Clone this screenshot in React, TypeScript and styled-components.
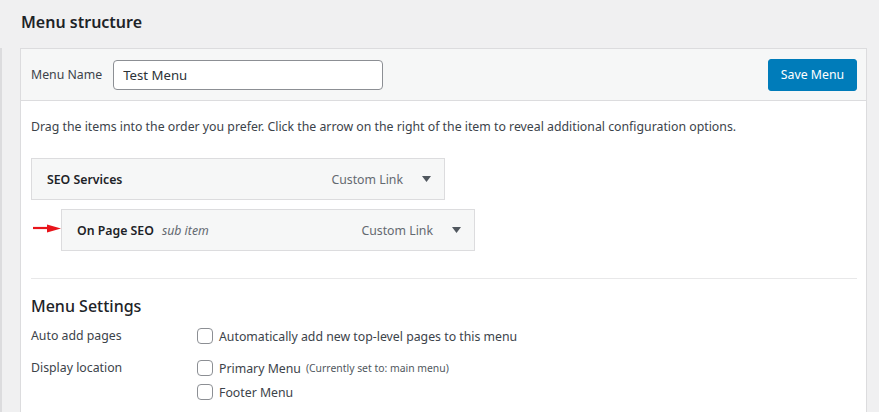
import React from 'react'
import styled, { createGlobalStyle } from 'styled-components'

const GlobalStyle = createGlobalStyle`
  html, body {
    margin: 0;
    padding: 0;
    background: #f0f0f1;
  }
  body {
    font-family: "Segoe UI", "Noto Sans", "Open Sans", sans-serif;
    font-size: 12.3px;
    color: #3c434a;
  }
`

type MenuItem = {
  title: string
  note?: string
  type: string
  depth: number
  marked?: boolean
}

const items: MenuItem[] = [
  { title: 'SEO Services', type: 'Custom Link', depth: 0 },
  { title: 'On Page SEO', note: 'sub item', type: 'Custom Link', depth: 1, marked: true },
]

function ToggleArrow() {
  return (
    <svg width="9" height="6" viewBox="0 0 9 6">
      <path d="M0 0 H9 L4.5 6 Z" fill="#50575e" />
    </svg>
  )
}

function RedArrow() {
  return (
    <svg width="28" height="9" viewBox="0 0 28 9">
      <path d="M0 3.6 H16 V4.4 H0 Z" fill="#e8141b" stroke="#e8141b" strokeWidth="1.4" />
      <path d="M14 0.5 L28 4.5 L14 8.5 Z" fill="#e8141b" />
    </svg>
  )
}

export default function App() {
  return (
    <>
      <GlobalStyle />
      <Page>
        <Title>Menu structure</Title>
        <Row>
          <SidebarEdge />
          <Panel>
            <PanelHeader>
              <NameLabel htmlFor="menu-name">Menu Name</NameLabel>
              <NameInput id="menu-name" type="text" defaultValue="Test Menu" />
              <SaveButton>Save Menu</SaveButton>
            </PanelHeader>
            <PanelBody>
              <Instructions>
                Drag the items into the order you prefer. Click the arrow on the right of the item to reveal
                additional configuration options.
              </Instructions>
              <ItemList>
                {items.map((item) => (
                  <ItemBar key={item.title} depth={item.depth}>
                    {item.marked && (
                      <Marker>
                        <RedArrow />
                      </Marker>
                    )}
                    <ItemTitle>
                      {item.title}
                      {item.note && <SubNote>{item.note}</SubNote>}
                    </ItemTitle>
                    <ItemControls>
                      <ItemType>{item.type}</ItemType>
                      <ToggleArrow />
                    </ItemControls>
                  </ItemBar>
                ))}
              </ItemList>
              <Settings>
                <SettingsTitle>Menu Settings</SettingsTitle>
                <SettingRow>
                  <SettingName>Auto add pages</SettingName>
                  <SettingInputs>
                    <CheckLine>
                      <Checkbox type="checkbox" />
                      Automatically add new top-level pages to this menu
                    </CheckLine>
                  </SettingInputs>
                </SettingRow>
                <SettingRow>
                  <SettingName>Display location</SettingName>
                  <SettingInputs>
                    <CheckLine>
                      <Checkbox type="checkbox" />
                      Primary Menu
                      <Hint>(Currently set to: main menu)</Hint>
                    </CheckLine>
                    <CheckLine>
                      <Checkbox type="checkbox" />
                      Footer Menu
                    </CheckLine>
                  </SettingInputs>
                </SettingRow>
              </Settings>
            </PanelBody>
          </Panel>
        </Row>
      </Page>
    </>
  )
}

const Page = styled.div`
  width: 879px;
  height: 412px;
  overflow: hidden;
`

const Title = styled.h2`
  margin: 0;
  padding: 11px 0 0 21px;
  height: 37px;
  font-size: 16px;
  line-height: 23px;
  font-weight: 600;
  color: #1d2327;
`

const Row = styled.div`
  display: flex;
  align-items: stretch;
  height: 364px;
`

const SidebarEdge = styled.div`
  width: 2px;
  background: #dcdcde;
  margin-right: 18px;
`

const Panel = styled.div`
  width: 845px;
  border: 1px solid #dcdcde;
  border-bottom: none;
  background: #fff;
`

const PanelHeader = styled.div`
  display: flex;
  align-items: center;
  height: 51px;
  padding: 0 9px 0 10px;
  background: #f6f7f7;
  border-bottom: 1px solid #dcdcde;
`

const NameLabel = styled.label`
  margin-right: 11px;
  color: #3c434a;
`

const NameInput = styled.input`
  box-sizing: border-box;
  width: 270px;
  height: 30px;
  padding: 0 9px;
  border: 1px solid #8c8f94;
  border-radius: 4px;
  font-family: inherit;
  font-size: 13.2px;
  color: #2c3338;
  background: #fff;
`

const SaveButton = styled.button`
  margin-left: auto;
  width: 89px;
  height: 32px;
  padding: 0;
  border: 1px solid #007cba;
  border-radius: 3px;
  background: #007cba;
  color: #fff;
  font-family: inherit;
  font-size: 12.3px;
`

const PanelBody = styled.div`
  padding: 0 9px 0 10px;
`

const Instructions = styled.p`
  margin: 17px 0 22px;
  line-height: 18px;
`

const ItemList = styled.div`
  display: flex;
  flex-direction: column;
  gap: 9px;
`

const ItemBar = styled.div<{ depth: number }>`
  position: relative;
  box-sizing: border-box;
  display: flex;
  align-items: center;
  justify-content: space-between;
  width: 414px;
  height: 42px;
  margin-left: ${(p) => p.depth * 30}px;
  padding: 0 13px 0 15px;
  border: 1px solid #dcdcde;
  background: #f6f7f7;
`

const Marker = styled.span`
  position: absolute;
  left: -29px;
  top: 14px;
  display: flex;
`

const ItemTitle = styled.span`
  font-weight: 600;
  color: #1d2327;
`

const SubNote = styled.span`
  margin-left: 8px;
  font-style: italic;
  font-weight: 400;
  color: #646970;
`

const ItemControls = styled.span`
  display: flex;
  align-items: center;
  gap: 19px;
`

const ItemType = styled.span`
  color: #646970;
`

const Settings = styled.div`
  margin-top: 27px;
  border-top: 1px solid #e8e8e9;
`

const SettingsTitle = styled.h3`
  margin: 14px 0 5px;
  font-size: 16px;
  line-height: 26px;
  font-weight: 500;
  color: #1d2327;
`

const SettingRow = styled.div`
  display: grid;
  grid-template-columns: 166px 1fr;
  margin-bottom: 8px;
`

const SettingName = styled.div`
  line-height: 24px;
`

const SettingInputs = styled.div`
  display: flex;
  flex-direction: column;
`

const CheckLine = styled.label`
  display: flex;
  align-items: center;
  height: 24px;
  color: #3c434a;
`

const Checkbox = styled.input`
  appearance: none;
  box-sizing: border-box;
  width: 16px;
  height: 16px;
  margin: 0 6px 0 0;
  border: 1px solid #8c8f94;
  border-radius: 4px;
  background: #fff;
`

const Hint = styled.span`
  margin-left: 5px;
  font-size: 10.4px;
  color: #50575e;
`
